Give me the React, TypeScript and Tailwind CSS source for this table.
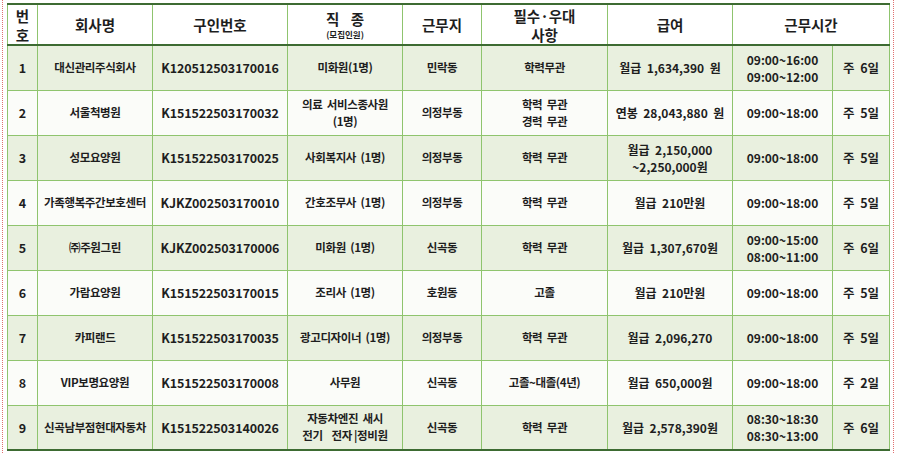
import React from "react";

type Row = {
  no: string;
  company: string;
  id: string;
  job: React.ReactNode;
  area: string;
  req: React.ReactNode;
  pay: React.ReactNode;
  time: React.ReactNode;
  days: string;
};

const rows: Row[] = [
  { no: "1", company: "대신관리주식회사", id: "K120512503170016", job: "미화원(1명)", area: "민락동", req: "학력무관", pay: "월급  1,634,390  원", time: <>09:00~16:00<br />09:00~12:00</>, days: "주  6일" },
  { no: "2", company: "서울척병원", id: "K151522503170032", job: <>의료  서비스종사원<br />(1명)</>, area: "의정부동", req: <>학력  무관<br />경력  무관</>, pay: "연봉  28,043,880  원", time: "09:00~18:00", days: "주  5일" },
  { no: "3", company: "성모요양원", id: "K151522503170025", job: "사회복지사  (1명)", area: "의정부동", req: "학력  무관", pay: <>월급  2,150,000<br />~2,250,000원</>, time: "09:00~18:00", days: "주  5일" },
  { no: "4", company: "가족행복주간보호센터", id: "KJKZ002503170010", job: "간호조무사  (1명)", area: "의정부동", req: "학력  무관", pay: "월급  210만원", time: "09:00~18:00", days: "주  5일" },
  { no: "5", company: "㈜주원그린", id: "KJKZ002503170006", job: "미화원  (1명)", area: "신곡동", req: "학력  무관", pay: "월급  1,307,670원", time: <>09:00~15:00<br />08:00~11:00</>, days: "주  6일" },
  { no: "6", company: "가람요양원", id: "K151522503170015", job: "조리사  (1명)", area: "호원동", req: "고졸", pay: "월급  210만원", time: "09:00~18:00", days: "주  5일" },
  { no: "7", company: "카피랜드", id: "K151522503170035", job: "광고디자이너  (1명)", area: "의정부동", req: "학력  무관", pay: "월급  2,096,270", time: "09:00~18:00", days: "주  5일" },
  { no: "8", company: "VIP보명요양원", id: "K151522503170008", job: "사무원", area: "신곡동", req: "고졸~대졸(4년)", pay: "월급  650,000원", time: "09:00~18:00", days: "주  2일" },
  { no: "9", company: "신곡남부점현대자동차", id: "K151522503140026", job: <>자동차엔진  새시<br />전기    전자 |정비원</>, area: "신곡동", req: "학력  무관", pay: "월급  2,578,390원", time: <>08:30~18:30<br />08:30~13:00</>, days: "주  6일" },
];

const cell = "border-x border-[#8fc46e] text-center align-middle whitespace-pre px-0";
// Korean-heavy cells are a bit narrower than the latin ones in the reference
const ko = "text-[11.5px] tracking-[-0.4px]";

export default function App() {
  return (
    <div className="bg-white w-[900px] h-[456px]">
      <div className="ml-[2px] w-[892px] border-x border-dotted border-[#e07070] pl-[4px] pr-[3px] pt-[3px] pb-[2px]">
        <table
          className="w-[882px] border-collapse table-fixed text-[#1e1e1e] text-[12px] font-semibold leading-[17px]"
          style={{ fontFamily: '"Noto Sans CJK KR", "Noto Sans", sans-serif' }}
        >
          <colgroup>
            <col className="w-[30px]" />
            <col className="w-[115px]" />
            <col className="w-[135px]" />
            <col className="w-[115px]" />
            <col className="w-[79px]" />
            <col className="w-[126px]" />
            <col className="w-[125px]" />
            <col className="w-[100px]" />
            <col className="w-[57px]" />
          </colgroup>
          <thead>
            <tr className="h-[41px] bg-white border-t-2 border-b-2 border-[#3d6b32] text-[14.5px] font-bold leading-[19px]">
              <th className={cell}>번<br />호</th>
              <th className={cell}>회사명</th>
              <th className={cell}>구인번호</th>
              <th className={cell}>
                <div className="tracking-[4px] pl-[4px]">직 종</div>
                <div className="text-[8.5px] leading-[12px] font-semibold">(모집인원)</div>
              </th>
              <th className={cell}>근무지</th>
              <th className={cell}>필수·우대<br />사항</th>
              <th className={cell}>급여</th>
              <th className={cell} colSpan={2}>근무시간</th>
            </tr>
          </thead>
          <tbody>
            {rows.map((r, i) => (
              <tr
                key={r.no}
                className={`h-[45px] border-b border-[#8fc46e] last:border-b-2 last:border-b-[#3d6b32] ${
                  i % 2 === 0 ? "bg-[#e9f0df]" : "bg-[#fbfcf9]"
                }`}
              >
                <td className={`${cell} text-[12.5px]`}>{r.no}</td>
                <td className={`${cell} ${ko}`}>{r.company}</td>
                <td className={`${cell} text-[12.5px] tracking-[-0.1px]`}>{r.id}</td>
                <td className={`${cell} ${ko}`}>{r.job}</td>
                <td className={`${cell} ${ko}`}>{r.area}</td>
                <td className={`${cell} ${ko}`}>{r.req}</td>
                <td className={cell}>{r.pay}</td>
                <td className={cell}>{r.time}</td>
                <td className={`${cell} text-[12.5px]`}>{r.days}</td>
              </tr>
            ))}
          </tbody>
        </table>
      </div>
    </div>
  );
}
